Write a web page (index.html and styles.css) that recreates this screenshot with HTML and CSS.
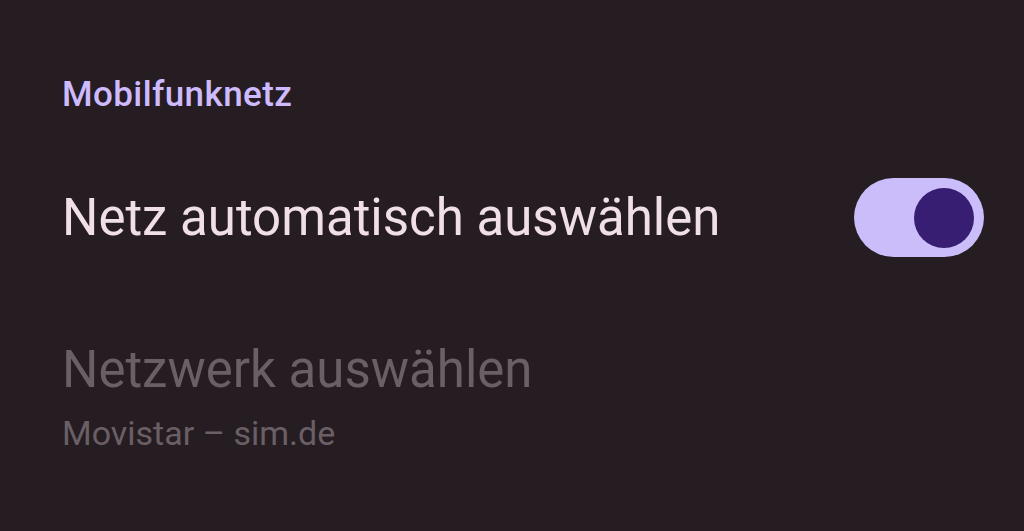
FILE: index.html
```html
<!DOCTYPE html>
<html lang="de">
<head>
    <meta charset="UTF-8">
    <meta name="viewport" content="width=device-width, initial-scale=1.0">
    <title>Mobilfunknetz</title>
    <link rel="stylesheet" href="styles.css">
</head>
<body>
    <div class="settings">
        <h2 class="section-title">Mobilfunknetz</h2>

        <!-- Automatische Netzwahl -->
        <div class="row auto">
            <div class="row-text">
                <div class="row-title">Netz automatisch auswählen</div>
            </div>
            <div class="switch on">
                <div class="thumb"></div>
            </div>
        </div>

        <!-- Manuelle Auswahl (deaktiviert) -->
        <div class="row disabled">
            <div class="row-text">
                <div class="row-title">Netzwerk auswählen</div>
                <div class="row-summary">Movistar – sim.de</div>
            </div>
        </div>
    </div>
</body>
</html>
```

FILE: styles.css
```css
body {
    margin: 0;
    background: #251d22;
    font-family: Roboto, 'Noto Sans', sans-serif;
    color: #f0dfe6;
    overflow: hidden;
}
.settings {
    padding: 75px 40px 0 62px;
}
.section-title {
    margin: 0;
    font-size: 35px;
    font-weight: 500;
    line-height: 40px;
    letter-spacing: 0.4px;
    color: #cdbaff;
}
.row {
    display: flex;
    align-items: center;
    justify-content: space-between;
}
.row.auto {
    margin-top: 63px;
}
.row.disabled {
    margin-top: 83px;
}
.row-title {
    font-size: 51px;
    line-height: 60px;
}
.row-summary {
    margin-top: 10px;
    font-size: 34px;
    line-height: 46px;
}
.row.disabled .row-title,
.row.disabled .row-summary {
    color: #6b5f66;
}
.switch {
    width: 130px;
    height: 79px;
    border-radius: 40px;
    background: #cbbdf9;
    display: flex;
    align-items: center;
    justify-content: flex-end;
    padding: 0 10px;
    box-sizing: border-box;
}
.thumb {
    width: 60px;
    height: 60px;
    border-radius: 50%;
    background: #381e72;
}
```
